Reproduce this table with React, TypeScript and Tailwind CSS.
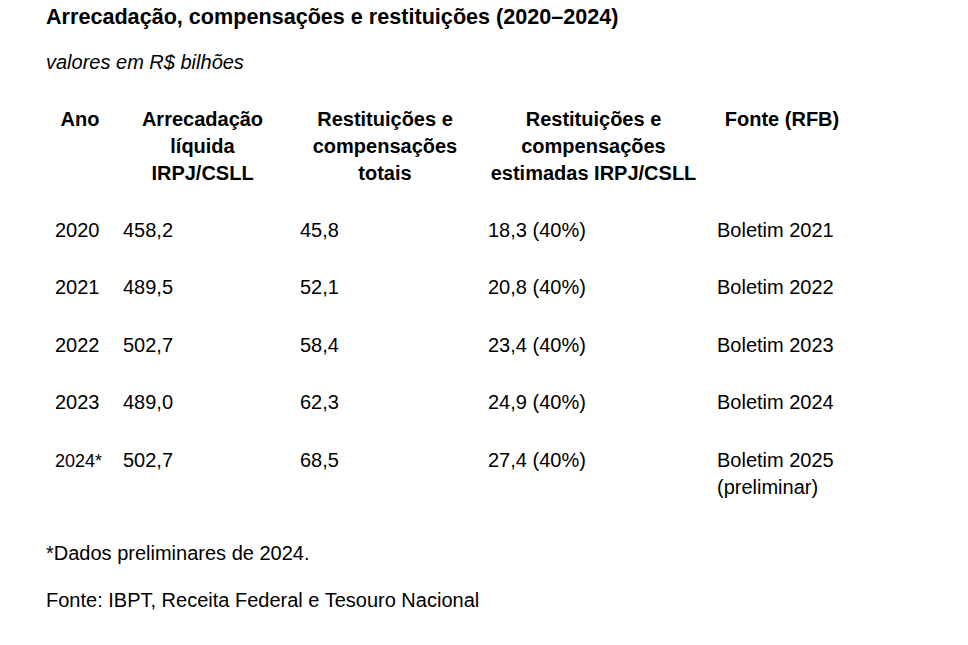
import { memo } from "react";

type Row = {
    ano: string;
    arrecadacao: string;
    totais: string;
    estimadas: string;
    fonte: string;
    nota?: string;
    preliminar?: boolean;
}

const rows: Row[] = [
    { ano: "2020", arrecadacao: "458,2", totais: "45,8", estimadas: "18,3 (40%)", fonte: "Boletim 2021" },
    { ano: "2021", arrecadacao: "489,5", totais: "52,1", estimadas: "20,8 (40%)", fonte: "Boletim 2022" },
    { ano: "2022", arrecadacao: "502,7", totais: "58,4", estimadas: "23,4 (40%)", fonte: "Boletim 2023" },
    { ano: "2023", arrecadacao: "489,0", totais: "62,3", estimadas: "24,9 (40%)", fonte: "Boletim 2024" },
    { ano: "2024*", arrecadacao: "502,7", totais: "68,5", estimadas: "27,4 (40%)", fonte: "Boletim 2025", nota: "(preliminar)", preliminar: true },
];

/**
 * Tabela de arrecadação IRPJ/CSLL com restituições e compensações.
 */
function App() {
    const th = "px-[9px] pt-[15px] pb-[14.5px] align-top text-center font-bold";
    const td = "px-[9px] py-[15.25px] align-top text-left font-normal";

    return (
        <div id="page" className="min-h-[645px] w-[968px] bg-white px-[46px] pt-[3px] text-black font-['Liberation_Sans',Arial,sans-serif] text-[20px] leading-[27px]">
            <h1 className="font-bold text-[21.6px] leading-[28px]">
                Arrecadação, compensações e restituições (2020–2024)
            </h1>
            <p className="mt-[18px] italic">valores em R$ bilhões</p>

            <table className="mt-[15px] w-[810px] table-fixed border-collapse">
                <thead>
                    <tr>
                        <th className={`${th} w-[68px]`}>Ano</th>
                        <th className={`${th} w-[177px]`}>Arrecadação líquida IRPJ/CSLL</th>
                        <th className={`${th} w-[188px]`}>Restituições e compensações totais</th>
                        <th className={`${th} w-[229px]`}>Restituições e compensações estimadas IRPJ/CSLL</th>
                        <th className={`${th} w-[148px]`}>Fonte (RFB)</th>
                    </tr>
                </thead>
                <tbody>
                    {rows.map((r) => (
                        <tr key={r.ano}>
                            <td className={td}>
                                {r.preliminar ? <span className="text-[18px]">{r.ano}</span> : r.ano}
                            </td>
                            <td className={td}>{r.arrecadacao}</td>
                            <td className={td}>{r.totais}</td>
                            <td className={td}>{r.estimadas}</td>
                            <td className={td}>
                                {r.fonte}
                                {r.nota && <><br />{r.nota}</>}
                            </td>
                        </tr>
                    ))}
                </tbody>
            </table>

            <p className="mt-[23.5px]">*Dados preliminares de 2024.</p>
            <p className="mt-[20px]">Fonte: IBPT, Receita Federal e Tesouro Nacional</p>
        </div>
    )
}

export default memo(App);
